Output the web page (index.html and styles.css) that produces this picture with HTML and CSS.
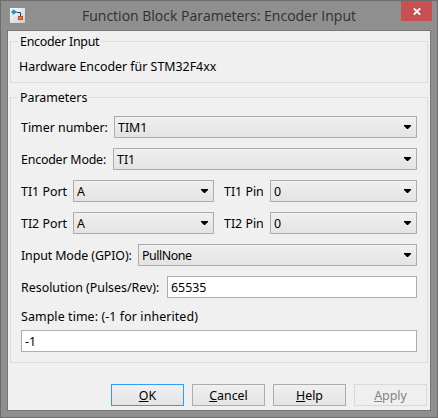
FILE: index.html
```html
<!DOCTYPE html>
<html lang="en">
<head>
<meta charset="utf-8">
<title>Function Block Parameters: Encoder Input</title>
<link rel="stylesheet" href="styles.css">
</head>
<body>
<div class="window">
  <header class="titlebar">
    <svg class="app-icon" width="15" height="15" viewBox="0 0 15 15">
      <defs><linearGradient id="tile" x1="0" y1="0" x2="1" y2="1"><stop offset="0" stop-color="#fff"/><stop offset="1" stop-color="#c8cacc"/></linearGradient></defs>
      <rect width="15" height="15" fill="url(#tile)"/>
      <path d="M1 4h2M7 4.5h3.5v4" fill="none" stroke="#34404a"/>
      <path d="M2.5 1v6l5-3z" fill="#1f8fc6"/>
      <rect x="8.5" y="8.5" width="4" height="3" fill="#f07840" stroke="#c4481c"/>
    </svg>
    <h1 class="title">Function Block Parameters: Encoder Input</h1>
    <button class="close" aria-label="Close"><svg width="8" height="7" viewBox="0 0 8 7"><path d="M.8 .3L7.2 6.7M7.2 .3L.8 6.7" stroke="#fff" stroke-width="1.8"/></svg></button>
  </header>
  <main class="client">
    <section class="group about">
      <h2 class="legend"><span>Encoder Input</span></h2>
      <p class="description">Hardware Encoder für STM32F4xx</p>
    </section>
    <section class="group params">
      <h2 class="legend"><span>Parameters</span></h2>
      <div class="row"><label class="w-timer">Timer number:</label><div class="combo">TIM1</div></div>
      <div class="row"><label class="w-mode">Encoder Mode:</label><div class="combo">TI1</div></div>
      <div class="row"><label class="w-port">TI1 Port</label><div class="combo port">A</div><label class="w-pin">TI1 Pin</label><div class="combo">0</div></div>
      <div class="row"><label class="w-port">TI2 Port</label><div class="combo port">A</div><label class="w-pin">TI2 Pin</label><div class="combo">0</div></div>
      <div class="row"><label class="w-input">Input Mode (GPIO):</label><div class="combo pull">PullNone</div></div>
      <div class="row"><label class="w-res">Resolution (Pulses/Rev):</label><div class="field">65535</div></div>
      <label class="sample">Sample time: (-1 for inherited)</label>
      <div class="field wide">-1</div>
    </section>
    <footer class="actions">
      <button class="btn default"><u>O</u>K</button>
      <button class="btn"><u>C</u>ancel</button>
      <button class="btn"><u>H</u>elp</button>
      <button class="btn" disabled><u>A</u>pply</button>
    </footer>
  </main>
</div>
</body>
</html>
```
FILE: styles.css
```css
* { box-sizing: border-box; }
body { margin: 0; font: 12.4px/20px "Noto Sans", sans-serif; color: #000; }
h1, h2, p { margin: 0; font-size: inherit; font-weight: normal; }
.window { width: 438px; height: 418px; background: #8f8f8f; border: 1px solid #6c6c6c; padding: 0 6px 6px; }
.titlebar { height: 29px; display: flex; align-items: flex-start; }
.app-icon { margin: 7px 0 0 3px; }
.title { margin: 4px 0 0 57px; font: 14px/21px "Open Sans", sans-serif; color: #303030; white-space: nowrap; }
.close { margin-left: auto; margin-right: -1px; width: 31px; height: 20px; border: 0; padding: 1px 0 0; background: #c75050; display: flex; align-items: center; justify-content: center; }
.client { width: 424px; height: 381px; background: #f0f0f0; border: 1px solid #767676; padding: 10px 2px 0; }
.group { border: 1px solid #dcdcdc; width: 418px; }
.about { height: 42px; padding: 0 8px; }
.params { height: 266px; margin-top: 14px; padding: 0 10px; }
.legend { height: 18px; margin: -10px 0 0; line-height: 20px; }
.about .legend { margin-left: -1px; letter-spacing: -0.25px; }
.params .legend { margin-left: -3px; margin-bottom: 10px; }
.legend span { display: inline-block; background: #f0f0f0; padding: 0 2px; white-space: nowrap; }
.description { margin-top: 7px; white-space: nowrap; }
.row { display: flex; height: 22px; margin-bottom: 10px; }
label { flex: none; line-height: 22px; padding-top: 1px; white-space: nowrap; }
.w-timer { width: 93px; }
.w-mode { width: 92px; letter-spacing: -0.2px; }
.w-port { width: 52px; }
.w-pin { width: 46px; }
.w-input { width: 117px; letter-spacing: -0.1px; }
.w-res { width: 146px; }
.combo, .field { flex: 1; height: 22px; border: 1px solid #acacac; padding: 1px 3px 0; line-height: 20px; }
.combo { background: linear-gradient(#f0f0f0, #e3e3e3); display: flex; justify-content: space-between; }
.combo::after { content: ""; width: 7px; height: 4px; margin: 7px 2px 0 0; background: #000; clip-path: polygon(0 0, 100% 0, 100% 25%, 57% 100%, 43% 100%, 0 25%); }
.port { flex: none; width: 141px; margin-right: 10px; }
.pull { letter-spacing: -0.45px; }
.field { background: #fff; border-color: #abadb3; }
.sample { display: block; height: 25px; margin-top: -3px; letter-spacing: 0.1px; }
.wide { width: 396px; }
.actions { display: flex; justify-content: flex-end; gap: 8px; margin: 21px 1px 0 0; }
.btn { width: 73px; height: 22px; padding: 1px 0 0; border: 1px solid #acacac; background: linear-gradient(#f0f0f0, #e4e4e4); font: inherit; line-height: 18px; color: #000; }
.default { border-color: #3399ff; }
.btn:disabled { border-color: #d9d9d9; background: #efefef; color: #838383; }
```
